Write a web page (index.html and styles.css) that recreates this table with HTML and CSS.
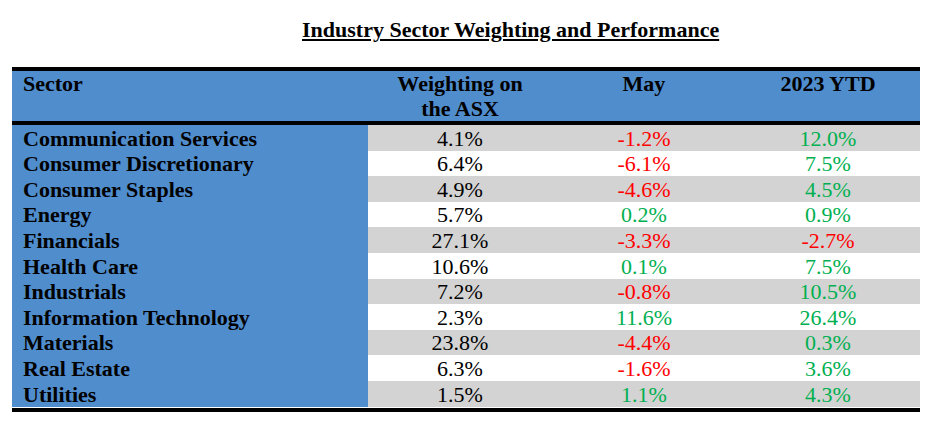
FILE: index.html
```html
<!DOCTYPE html>
<html lang="en">
<head>
<meta charset="utf-8">
<title>Industry Sector Weighting and Performance</title>
<link rel="stylesheet" href="styles.css">
</head>
<body>
<div class="page">
  <h1 class="title">Industry Sector Weighting and Performance</h1>
  <table class="sectors">
    <colgroup>
      <col class="c-sector">
      <col class="c-num">
      <col class="c-num">
      <col class="c-num">
    </colgroup>
    <thead>
      <tr>
        <th class="name">Sector</th>
        <th>Weighting on<br>the ASX</th>
        <th>May</th>
        <th>2023 YTD</th>
      </tr>
    </thead>
    <tbody>
      <tr class="shade"><th class="name">Communication Services</th><td>4.1%</td><td class="neg">-1.2%</td><td class="pos">12.0%</td></tr>
      <tr><th class="name">Consumer Discretionary</th><td>6.4%</td><td class="neg">-6.1%</td><td class="pos">7.5%</td></tr>
      <tr class="shade"><th class="name">Consumer Staples</th><td>4.9%</td><td class="neg">-4.6%</td><td class="pos">4.5%</td></tr>
      <tr><th class="name">Energy</th><td>5.7%</td><td class="pos">0.2%</td><td class="pos">0.9%</td></tr>
      <tr class="shade"><th class="name">Financials</th><td>27.1%</td><td class="neg">-3.3%</td><td class="neg">-2.7%</td></tr>
      <tr><th class="name">Health Care</th><td>10.6%</td><td class="pos">0.1%</td><td class="pos">7.5%</td></tr>
      <tr class="shade"><th class="name">Industrials</th><td>7.2%</td><td class="neg">-0.8%</td><td class="pos">10.5%</td></tr>
      <tr><th class="name">Information Technology</th><td>2.3%</td><td class="pos">11.6%</td><td class="pos">26.4%</td></tr>
      <tr class="shade"><th class="name">Materials</th><td>23.8%</td><td class="neg">-4.4%</td><td class="pos">0.3%</td></tr>
      <tr><th class="name">Real Estate</th><td>6.3%</td><td class="neg">-1.6%</td><td class="pos">3.6%</td></tr>
      <tr class="shade last"><th class="name">Utilities</th><td>1.5%</td><td class="pos">1.1%</td><td class="pos">4.3%</td></tr>
    </tbody>
  </table>
</div>
</body>
</html>
```

FILE: styles.css
```css
html, body {
  margin: 0;
  padding: 0;
  background: #ffffff;
}

.page {
  width: 926px;
  height: 429px;
  font-family: "Liberation Serif", "Times New Roman", serif;
  font-size: 22px;
  color: #000;
  display: flex;
  flex-direction: column;
  align-items: flex-start;
}

.title {
  margin: 17px 0 0 302px;
  font-size: 22px;
  font-weight: bold;
  line-height: 25px;
  text-decoration: underline;
  text-decoration-thickness: 2px;
  text-underline-offset: 2px;
}

.sectors {
  margin: 25px 0 0 12px;
  width: 908px;
  table-layout: fixed;
  border-collapse: separate;
  border-spacing: 0;
  border-top: 4px solid #000;
  border-bottom: 4px solid #000;
}

.c-sector { width: 356px; }
.c-num { width: 184px; }

.sectors thead th {
  background: #508dcd;
  font-weight: bold;
  line-height: 24.5px;
  padding: 1px 0 0;
  vertical-align: top;
  text-align: center;
  border-bottom: 4px solid #000;
}

.sectors th.name {
  text-align: left;
  padding-left: 11px;
}

.sectors tbody th.name {
  background: #508dcd;
  font-weight: bold;
}

.sectors tbody th,
.sectors tbody td {
  height: 24px;
  line-height: 24px;
  padding-top: 1.6px;
  padding-bottom: 0;
  vertical-align: top;
  white-space: nowrap;
}

.sectors tbody td {
  text-align: center;
  padding-left: 0;
  padding-right: 0;
}

.sectors tbody tr.shade td {
  background: #d3d3d3;
}

.sectors tbody tr.last th,
.sectors tbody tr.last td {
  border-bottom: 1px solid #ffffff;
}

.neg { color: #ff0000; }
.pos { color: #00b050; }
```
